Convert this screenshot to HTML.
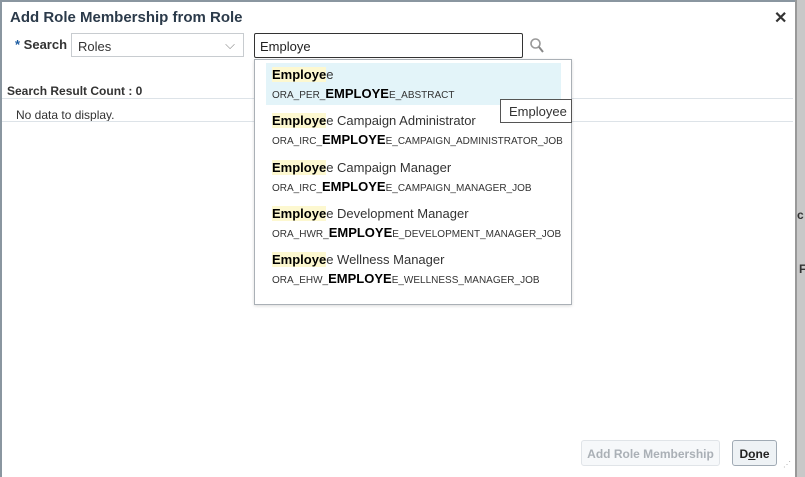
<!DOCTYPE html><html><head><style>
body{margin:0;width:805px;height:477px;overflow:hidden;background:#fff;font-family:"Liberation Sans",sans-serif;position:relative}
.a{position:absolute}
.hl{background:#fdf8d0;font-weight:bold;color:#000}
.t{font-size:13px;color:#333;white-space:nowrap}
.c{font-size:10px;color:#333;white-space:nowrap}
.c b{font-size:13px;color:#000}
</style></head><body>
<div class="a" style="left:0;top:0;width:2px;height:477px;background:#8a96a0"></div>
<div class="a" style="left:0;top:0;width:805px;height:2px;background:#8a96a0"></div>
<div class="a" style="left:795px;top:0;width:10px;height:477px;background:#c8c8c8"></div>
<div class="a" style="left:795px;top:0;width:2px;height:477px;background:#999"></div>
<div class="a" style="left:797px;top:208px;font-size:12px;font-weight:bold;color:#333">c</div>
<div class="a" style="left:799px;top:262px;font-size:12px;font-weight:bold;color:#333">F</div>
<div class="a" style="left:10px;top:9px;font-size:15px;font-weight:bold;color:#2b3a4a">Add Role Membership from Role</div>
<div class="a" style="left:774px;top:8px;font-size:16px;font-weight:bold;color:#333">✕</div>
<div class="a" style="left:15px;top:37px;font-size:13px;font-weight:bold;color:#333"><span style="color:#1a5aa0">*</span> Search</div>
<div class="a" style="left:71px;top:33px;width:173px;height:24px;border:1px solid #c8ccd0;box-sizing:border-box;font-size:13px;color:#333;padding:5px 0 0 6px">Roles<span style="position:absolute;right:8px;top:3px;color:#888">⌵</span></div>
<div class="a" style="left:254px;top:33px;width:269px;height:25px;border:1.5px solid #333;border-radius:2px;box-sizing:border-box;font-size:13px;color:#222;padding:5px 0 0 5px">Employe</div>
<svg class="a" style="left:529px;top:37px" width="16" height="17"><circle cx="6.5" cy="6.5" r="4.5" fill="none" stroke="#999" stroke-width="1.6"/><line x1="10" y1="10" x2="14" y2="15" stroke="#888" stroke-width="2"/></svg>
<div class="a" style="left:7px;top:84px;font-size:12px;font-weight:bold;color:#333">Search Result Count : 0</div>
<div class="a" style="left:2px;top:98px;width:791px;height:1px;background:#dde3e8"></div>
<div class="a" style="left:16px;top:108px;font-size:12px;color:#333">No data to display.</div>
<div class="a" style="left:2px;top:121px;width:791px;height:1px;background:#dde3e8"></div>
<div class="a" style="left:254px;top:59px;width:318px;height:246px;border:1px solid #aab0b6;box-sizing:border-box;background:#fff;box-shadow:0 1px 3px rgba(0,0,0,.15)"></div>
<div class="a" style="left:266px;top:63px;width:295px;height:42px;background:#e3f4f9"></div>
<div class="a t" style="left:272px;top:67px"><span class="hl">Employe</span>e</div>
<div class="a c" style="left:272px;top:86px">ORA_PER_<b>EMPLOYE</b>E_ABSTRACT</div>
<div class="a t" style="left:272px;top:113px"><span class="hl">Employe</span>e Campaign Administrator</div>
<div class="a c" style="left:272px;top:132px">ORA_IRC_<b>EMPLOYE</b>E_CAMPAIGN_ADMINISTRATOR_JOB</div>
<div class="a t" style="left:272px;top:160px"><span class="hl">Employe</span>e Campaign Manager</div>
<div class="a c" style="left:272px;top:179px">ORA_IRC_<b>EMPLOYE</b>E_CAMPAIGN_MANAGER_JOB</div>
<div class="a t" style="left:272px;top:206px"><span class="hl">Employe</span>e Development Manager</div>
<div class="a c" style="left:272px;top:225px">ORA_HWR_<b>EMPLOYE</b>E_DEVELOPMENT_MANAGER_JOB</div>
<div class="a t" style="left:272px;top:252px"><span class="hl">Employe</span>e Wellness Manager</div>
<div class="a c" style="left:272px;top:271px">ORA_EHW_<b>EMPLOYE</b>E_WELLNESS_MANAGER_JOB</div>
<div class="a" style="left:500px;top:99px;width:72px;height:24px;border:1px solid #555;box-sizing:border-box;background:#fff;font-size:13px;color:#333;padding:4px 0 0 8px">Employee</div>
<div class="a" style="left:581px;top:440px;width:139px;height:26px;border:1px solid #e0e4e8;border-radius:3px;box-sizing:border-box;background:#f6f8fa;font-size:12px;font-weight:bold;color:#aab0b6;text-align:center;padding-top:6px">Add Role Membership</div>
<div class="a" style="left:732px;top:440px;width:45px;height:26px;border:1px solid #a0aab4;border-radius:3px;box-sizing:border-box;background:#eef2f5;font-size:12px;font-weight:bold;color:#222;text-align:center;padding-top:6px">D<u>o</u>ne</div>
<div class="a" style="left:783px;top:460px;font-size:8px;color:#aaa">⋰</div>
</body></html>
